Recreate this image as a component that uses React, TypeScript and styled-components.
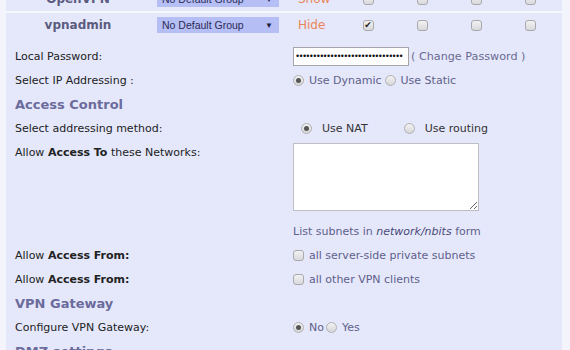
import styled, { createGlobalStyle } from "styled-components";

const GlobalStyle = createGlobalStyle`
  html, body {
    margin: 0;
    padding: 0;
    background: #f3f4fc;
    font-family: "DejaVu Sans", "Liberation Sans", sans-serif;
    font-size: 11px;
    color: #222;
  }
`;

const Panel = styled.div`
  width: 556px;
  margin: -13px 0 0 6px;
  background: #e5e8fb;
  overflow: hidden;
`;

const UserRow = styled.div`
  display: flex;
  align-items: center;
  height: 24px;
  border-bottom: 2px solid ${(p: { divider?: boolean }) => (p.divider ? "#f6f7fd" : "transparent")};
`;

const UserName = styled.div`
  width: 144px;
  text-align: center;
  font-weight: bold;
  font-size: 12px;
  color: #5b5b80;
`;

const GroupSelect = styled.div`
  margin-left: 7px;
  width: 122px;
  height: 16px;
  box-sizing: border-box;
  padding: 0 6px 0 5px;
  display: flex;
  align-items: center;
  justify-content: space-between;
  background: #b5bef5;
  font-family: "Liberation Sans", Arial, sans-serif;
  font-size: 10.5px;
  color: #2b2b55;
`;

const Arrow = styled.span`
  font-size: 8px;
  color: #1c1c40;
`;

const Action = styled.div`
  margin-left: 19px;
  width: 43px;
  font-size: 12px;
  color: #ea8458;
`;

const CheckCell = styled.div`
  width: 54px;
  display: flex;
  justify-content: center;
`;

const Box = styled.span<{ $checked?: boolean }>`
  display: inline-flex;
  align-items: center;
  justify-content: center;
  width: 11px;
  height: 11px;
  flex: none;
  box-sizing: border-box;
  border: 1px solid #a9a9ad;
  border-radius: 3px;
  background: linear-gradient(#f2f2f2, #d9d9dc);
  font-size: 9px;
  line-height: 1;
  color: #222;
`;

const Dot = styled.span<{ $checked?: boolean }>`
  display: inline-flex;
  align-items: center;
  justify-content: center;
  width: 11px;
  height: 11px;
  flex: none;
  box-sizing: border-box;
  border: 1px solid #b0b0b4;
  border-radius: 50%;
  background: linear-gradient(#f3f3f3, #d6d6da);
  &::after {
    content: "";
    width: 5px;
    height: 5px;
    border-radius: 50%;
    background: ${(p) => (p.$checked ? "#555" : "transparent")};
  }
`;

const Form = styled.div`
  margin-top: 5px;
  padding-left: 9px;
`;

const Row = styled.div<{ $tall?: boolean }>`
  display: grid;
  grid-template-columns: 278px 1fr;
  align-items: ${(p) => (p.$tall ? "start" : "center")};
  min-height: 24px;
`;

const Label = styled.div<{ $pad?: boolean }>`
  color: #222;
  padding-top: ${(p) => (p.$pad ? "6px" : "0")};
`;

const Heading = styled.div`
  height: 24px;
  display: flex;
  align-items: center;
  font-size: 13px;
  font-weight: bold;
  color: #6b6b9c;
`;

const Value = styled.div`
  display: flex;
  align-items: center;
  color: #60608a;
`;

const Choice = styled.label<{ $gap?: number; $lead?: number }>`
  display: inline-flex;
  align-items: center;
  gap: ${(p) => p.$gap ?? 5}px;
  margin-left: ${(p) => p.$lead ?? 0}px;
`;

const Password = styled.div`
  width: 116px;
  height: 19px;
  flex: none;
  box-sizing: border-box;
  border: 1px solid #a6a6aa;
  background: #fff;
  display: flex;
  align-items: center;
  padding-left: 2px;
  overflow: hidden;
  white-space: nowrap;
  font-family: "Liberation Sans", Arial, sans-serif;
  font-size: 9px;
  letter-spacing: 0.3px;
  color: #111;
`;

const Change = styled.span`
  margin-left: 2px;
  white-space: nowrap;
  font-size: 11.2px;
  color: #6a6a92;
`;

const NetArea = styled.textarea`
  margin-top: 3px;
  width: 186px;
  height: 68px;
  box-sizing: border-box;
  border: 1px solid #bdbdc2;
  background: #fff;
  resize: both;
  margin-bottom: 8px;
`;

const Hint = styled.span`
  color: #60608a;
  i {
    color: #4a4a78;
  }
`;

const Dark = styled.span`
  color: #333;
`;

export default function App() {
  return (
    <>
      <GlobalStyle />
      <Panel>
        <UserRow divider>
          <UserName>OpenVPN</UserName>
          <GroupSelect>
            No Default Group <Arrow>▼</Arrow>
          </GroupSelect>
          <Action>Show</Action>
          {[0, 1, 2, 3].map((i) => (
            <CheckCell key={i}>
              <Box />
            </CheckCell>
          ))}
        </UserRow>
        <UserRow>
          <UserName>vpnadmin</UserName>
          <GroupSelect>
            No Default Group <Arrow>▼</Arrow>
          </GroupSelect>
          <Action>Hide</Action>
          {[0, 1, 2, 3].map((i) => (
            <CheckCell key={i}>
              <Box $checked={i === 0}>{i === 0 ? "✔" : ""}</Box>
            </CheckCell>
          ))}
        </UserRow>

        <Form>
          <Row>
            <Label>Local Password:</Label>
            <Value>
              <Password>{"•".repeat(31)}</Password>
              <Change>( Change Password )</Change>
            </Value>
          </Row>
          <Row>
            <Label>Select IP Addressing :</Label>
            <Value>
              <Choice>
                <Dot $checked /> Use Dynamic
              </Choice>
              <Choice $lead={3}>
                <Dot /> Use Static
              </Choice>
            </Value>
          </Row>
          <Heading>Access Control</Heading>
          <Row>
            <Label>Select addressing method:</Label>
            <Value>
              <Choice $gap={10} $lead={8}>
                <Dot $checked />
                <Dark>Use NAT</Dark>
              </Choice>
              <Choice $gap={10} $lead={36}>
                <Dot />
                <Dark>Use routing</Dark>
              </Choice>
            </Value>
          </Row>
          <Row $tall>
            <Label $pad>
              Allow <b>Access To</b> these Networks:
            </Label>
            <Value>
              <NetArea />
            </Value>
          </Row>
          <Row>
            <Label />
            <Value>
              <Hint>
                List subnets in <i>network/nbits</i> form
              </Hint>
            </Value>
          </Row>
          <Row>
            <Label>
              Allow <b>Access From:</b>
            </Label>
            <Value>
              <Choice>
                <Box /> all server-side private subnets
              </Choice>
            </Value>
          </Row>
          <Row>
            <Label>
              Allow <b>Access From:</b>
            </Label>
            <Value>
              <Choice>
                <Box /> all other VPN clients
              </Choice>
            </Value>
          </Row>
          <Heading>VPN Gateway</Heading>
          <Row>
            <Label>Configure VPN Gateway:</Label>
            <Value>
              <Choice>
                <Dot $checked /> No
              </Choice>
              <Choice $lead={2}>
                <Dot /> Yes
              </Choice>
            </Value>
          </Row>
          <Heading>DMZ settings</Heading>
        </Form>
      </Panel>
    </>
  );
}
